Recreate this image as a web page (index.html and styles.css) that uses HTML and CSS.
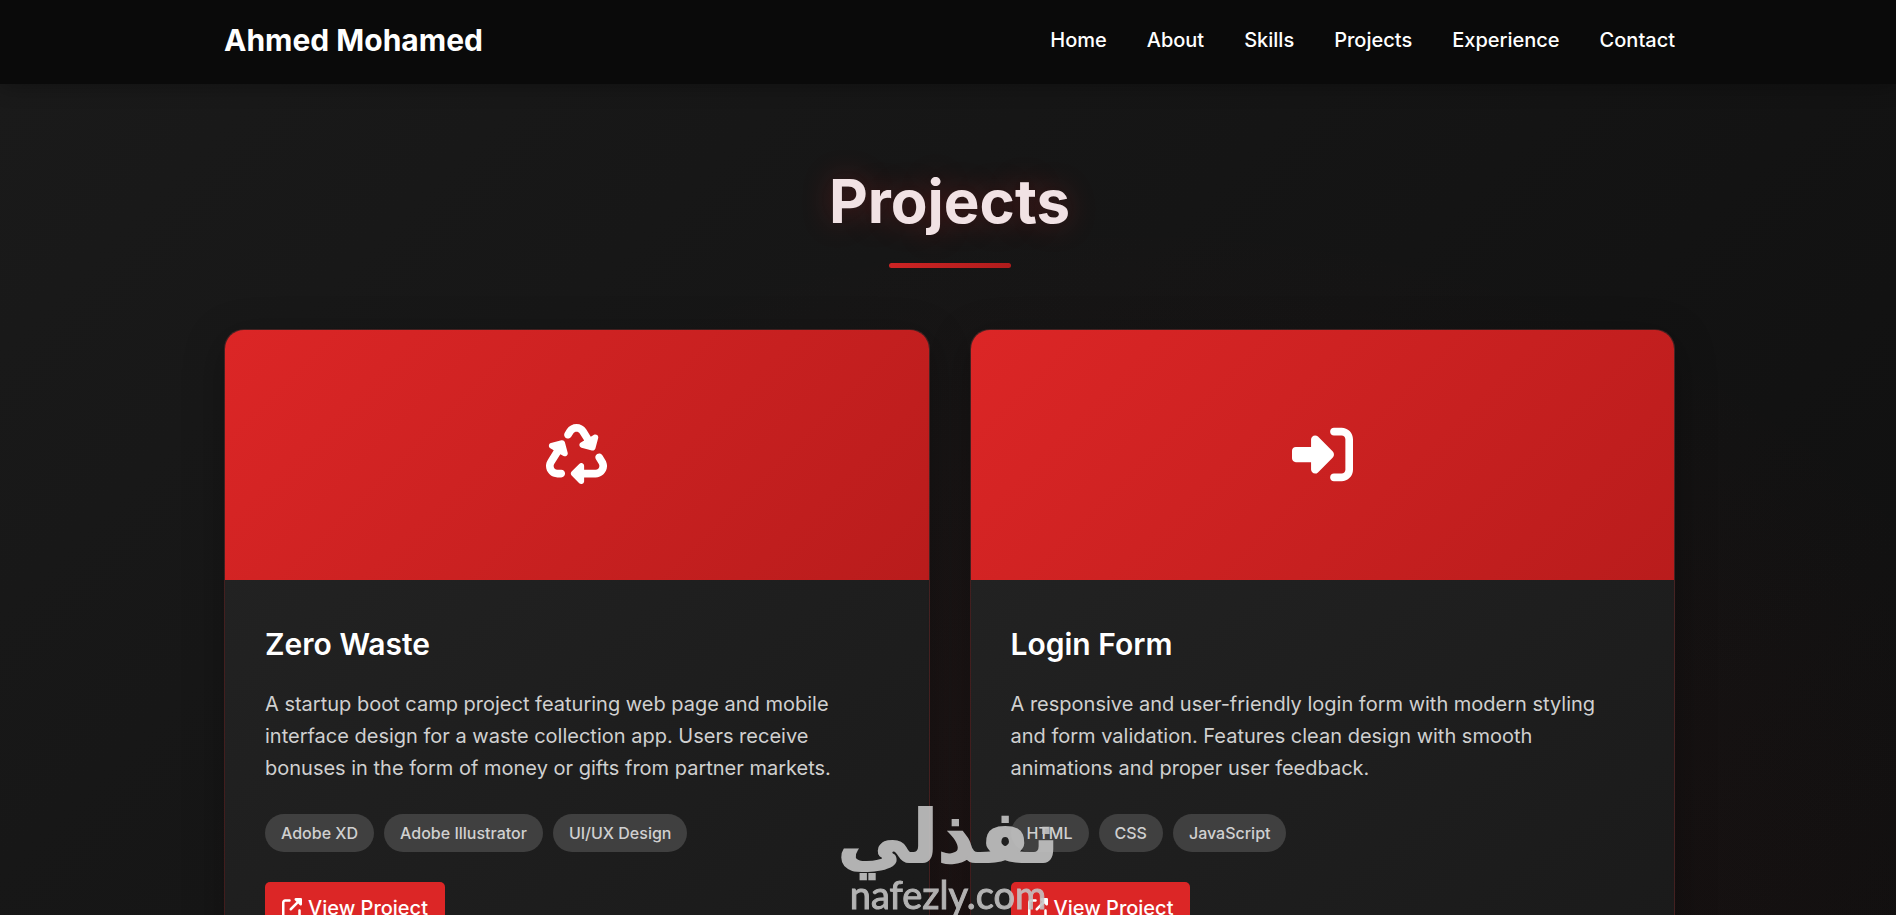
FILE: index.html
```html
<!DOCTYPE html>
<html lang="en">
<head>
    <meta charset="UTF-8">
    <meta name="viewport" content="width=device-width, initial-scale=1.0">
    <title>Ahmed Mohamed</title>
    <link rel="stylesheet" href="styles.css">
</head>
<body>
    <header class="header">
        <div class="container nav">
            <a href="#home" class="logo">Ahmed Mohamed</a>
            <nav class="nav-links">
                <a href="#home">Home</a>
                <a href="#about">About</a>
                <a href="#skills">Skills</a>
                <a href="#projects">Projects</a>
                <a href="#experience">Experience</a>
                <a href="#contact">Contact</a>
            </nav>
        </div>
    </header>

    <main class="projects" id="projects">
        <div class="container">
            <h2 class="section-title">Projects</h2>

            <div class="projects-grid">
                <article class="project-card">
                    <div class="project-image">
                        <svg viewBox="0 0 512 512" aria-hidden="true"><path d="M174.7 45.1C192.2 17 223 0 256 0s63.8 17 81.3 45.1l38.6 61.7 27-15.6c8.4-4.9 18.9-4.2 26.6 1.7s11.1 15.9 8.6 25.3l-23.4 87.4c-3.4 12.8-16.6 20.4-29.4 17l-87.4-23.4c-9.4-2.5-16.3-10.4-17.6-20s3.4-19.1 11.8-23.9l28.4-16.4L283 79c-5.8-9.3-16-15-27-15s-21.2 5.7-27 15l-17.5 28c-9.2 14.8-28.6 19.5-43.6 10.5c-15.3-9.2-20.2-29.2-10.7-44.4l17.5-28zM429.5 251.9c15-9 34.4-4.3 43.6 10.5l24.4 39.1c9.4 15.1 14.4 32.4 14.6 50.2c.3 53.1-42.7 96.4-95.8 96.4L320 448v32c0 9.7-5.8 18.5-14.8 22.2s-19.3 1.7-26.2-5.2l-64-64c-9.4-9.4-9.4-24.6 0-33.9l64-64c6.9-6.9 17.2-8.9 26.2-5.2s14.8 12.5 14.8 22.2v32l96.2 0c17.6 0 31.9-14.4 31.8-32c0-5.9-1.7-11.7-4.8-16.7l-24.4-39.1c-9.5-15.2-4.7-35.2 10.7-44.4zm-364.6-31L36 204.2c-8.4-4.9-13.1-14.3-11.8-23.9s8.2-17.5 17.6-20l87.4-23.4c12.8-3.4 26 4.2 29.4 17L182 241.2c2.5 9.4-.9 19.3-8.6 25.3s-18.2 6.6-26.6 1.7l-26.5-15.3L68.8 335.3c-3.1 5-4.8 10.8-4.8 16.7c-.1 17.6 14.2 32 31.8 32l32.2 0c17.7 0 32 14.3 32 32s-14.3 32-32 32l-32.2 0C42.7 448-.3 404.8 0 351.6c.1-17.8 5.1-35.1 14.6-50.2l50.3-80.5z"/></svg>
                    </div>
                    <div class="project-content">
                        <h3>Zero Waste</h3>
                        <p>A startup boot camp project featuring web page and mobile interface design for a waste collection app. Users receive bonuses in the form of money or gifts from partner markets.</p>
                        <div class="project-tech">
                            <span class="tech-tag">Adobe XD</span>
                            <span class="tech-tag">Adobe Illustrator</span>
                            <span class="tech-tag">UI/UX Design</span>
                        </div>
                        <a href="#zero-waste" class="project-link">
                            <svg viewBox="0 0 512 512" aria-hidden="true"><path d="M352 0c-12.9 0-24.6 7.8-29.6 19.8s-2.2 25.7 6.9 34.9L370.7 96 201.4 265.4c-12.5 12.5-12.5 32.8 0 45.3s32.8 12.5 45.3 0L416 141.3l41.4 41.4c9.2 9.2 22.9 11.9 34.9 6.9s19.8-16.6 19.8-29.6l0-128c0-17.7-14.3-32-32-32L352 0zM80 32C35.8 32 0 67.8 0 112L0 432c0 44.2 35.8 80 80 80l320 0c44.2 0 80-35.8 80-80l0-112c0-17.7-14.3-32-32-32s-32 14.3-32 32l0 112c0 8.8-7.2 16-16 16L80 448c-8.8 0-16-7.2-16-16l0-320c0-8.8 7.2-16 16-16l112 0c17.7 0 32-14.3 32-32s-14.3-32-32-32L80 32z"/></svg>
                            View Project
                        </a>
                    </div>
                </article>

                <article class="project-card">
                    <div class="project-image">
                        <svg viewBox="0 0 512 512" aria-hidden="true"><path d="M217.9 105.9L340.7 228.7c7.2 7.2 11.3 17.1 11.3 27.3s-4.1 20.1-11.3 27.3L217.9 406.1c-6.4 6.4-15 9.9-24 9.9c-18.7 0-33.9-15.2-33.9-33.9l0-62.1L32 320c-17.7 0-32-14.3-32-32l0-64c0-17.7 14.3-32 32-32l128 0 0-62.1c0-18.7 15.2-33.9 33.9-33.9c9 0 17.6 3.6 24 9.9zM352 416l64 0c17.7 0 32-14.3 32-32l0-256c0-17.7-14.3-32-32-32l-64 0c-17.7 0-32-14.3-32-32s14.3-32 32-32l64 0c53 0 96 43 96 96l0 256c0 53-43 96-96 96l-64 0c-17.7 0-32-14.3-32-32s14.3-32 32-32z"/></svg>
                    </div>
                    <div class="project-content">
                        <h3>Login Form</h3>
                        <p>A responsive and user-friendly login form with modern styling and form validation. Features clean design with smooth animations and proper user feedback.</p>
                        <div class="project-tech">
                            <span class="tech-tag">HTML</span>
                            <span class="tech-tag">CSS</span>
                            <span class="tech-tag">JavaScript</span>
                        </div>
                        <a href="#login-form" class="project-link">
                            <svg viewBox="0 0 512 512" aria-hidden="true"><path d="M352 0c-12.9 0-24.6 7.8-29.6 19.8s-2.2 25.7 6.9 34.9L370.7 96 201.4 265.4c-12.5 12.5-12.5 32.8 0 45.3s32.8 12.5 45.3 0L416 141.3l41.4 41.4c9.2 9.2 22.9 11.9 34.9 6.9s19.8-16.6 19.8-29.6l0-128c0-17.7-14.3-32-32-32L352 0zM80 32C35.8 32 0 67.8 0 112L0 432c0 44.2 35.8 80 80 80l320 0c44.2 0 80-35.8 80-80l0-112c0-17.7-14.3-32-32-32s-32 14.3-32 32l0 112c0 8.8-7.2 16-16 16L80 448c-8.8 0-16-7.2-16-16l0-320c0-8.8 7.2-16 16-16l112 0c17.7 0 32-14.3 32-32s-14.3-32-32-32L80 32z"/></svg>
                            View Project
                        </a>
                    </div>
                </article>
            </div>
        </div>
    </main>

    <div class="watermark">
        <span class="watermark-ar" lang="ar" dir="rtl">نفذلي</span>
        <span class="watermark-en">nafezly.com</span>
    </div>
</body>
</html>
```

FILE: styles.css
```css
* {
    margin: 0;
    padding: 0;
    box-sizing: border-box;
}

body {
    font-family: Inter, "Liberation Sans", sans-serif;
    font-size: 20px;
    line-height: 32px;
    color: #fff;
    background-color: #111;
}

a {
    color: inherit;
    text-decoration: none;
}

.container {
    max-width: 1500px;
    margin: 0 auto;
    padding: 0 23px 0 26px;
}

/* Header */
.header {
    position: sticky;
    top: 0;
    z-index: 10;
    padding: 16px 0 20px;
    background: #0a0a0a;
    box-shadow: 0 2px 20px rgba(0, 0, 0, 0.3);
}

.nav {
    display: flex;
    justify-content: space-between;
    align-items: center;
}

.logo {
    font-size: 30px;
    line-height: 48px;
    font-weight: 700;
}

.nav-links {
    display: flex;
    gap: 40px;
    font-weight: 500;
}

/* Projects */
.projects {
    padding: 81px 0 100px;
    background:
        radial-gradient(ellipse at 60% 85%, rgba(220, 38, 38, 0.06), transparent 60%),
        linear-gradient(135deg, #1a1a1a 0%, #0f0f0f 100%);
}

.section-title {
    margin-bottom: 61px;
    font-size: 60px;
    line-height: 72px;
    font-weight: 700;
    text-align: center;
    color: #f1e2e4;
    text-shadow: 0 0 30px rgba(220, 38, 38, 0.3);
}

.section-title::after {
    content: "";
    display: block;
    width: 122px;
    height: 5px;
    margin: 26px auto 0;
    border-radius: 3px;
    background: linear-gradient(90deg, #cc2424, #b01c1c);
}

.projects-grid {
    display: grid;
    grid-template-columns: repeat(2, 1fr);
    gap: 40px;
}

.project-card {
    overflow: hidden;
    border: 1px solid rgba(220, 38, 38, 0.2);
    border-radius: 20px;
    background: linear-gradient(145deg, #242424, #1a1a1a);
    box-shadow: 0 10px 40px rgba(0, 0, 0, 0.3);
}

.project-image {
    display: flex;
    justify-content: center;
    align-items: center;
    height: 250px;
    padding-bottom: 2px;
    background: linear-gradient(135deg, #dc2626, #b91c1c);
}

.project-image svg {
    width: 61px;
    height: 61px;
    fill: #fff;
}

.project-content {
    padding: 40px;
}

.project-content h3 {
    margin-bottom: 20px;
    font-size: 30px;
    line-height: 48px;
    font-weight: 600;
}

.project-content p {
    margin-bottom: 30px;
    color: #d0d0d0;
}

.project-tech {
    display: flex;
    flex-wrap: wrap;
    gap: 10px;
    margin-bottom: 30px;
}

.tech-tag {
    padding: 6px 16px;
    border-radius: 20px;
    background: #404040;
    color: #d0d0d0;
    font-size: 16px;
    line-height: 26px;
    font-weight: 500;
}

.project-link {
    display: inline-flex;
    align-items: center;
    gap: 6px;
    padding: 10px 17px;
    border-radius: 5px;
    background: #dc2626;
    font-weight: 500;
}

.project-link svg {
    width: 20px;
    height: 20px;
    fill: currentColor;
}

/* Watermark over the page */
.watermark {
    position: fixed;
    left: 50%;
    bottom: 0;
    z-index: 20;
    display: flex;
    flex-direction: column;
    align-items: center;
    transform: translateX(-50%);
    color: #c4c4c4;
    opacity: 0.9;
    pointer-events: none;
}

.watermark-ar {
    font-family: "DejaVu Sans", sans-serif;
    font-size: 72px;
    line-height: 72px;
    font-weight: 700;
    -webkit-text-stroke: 2px #c4c4c4;
}

.watermark-en {
    font-family: Lato, sans-serif;
    font-size: 38px;
    line-height: 42px;
    -webkit-text-stroke: 1px #c4c4c4;
}
```
